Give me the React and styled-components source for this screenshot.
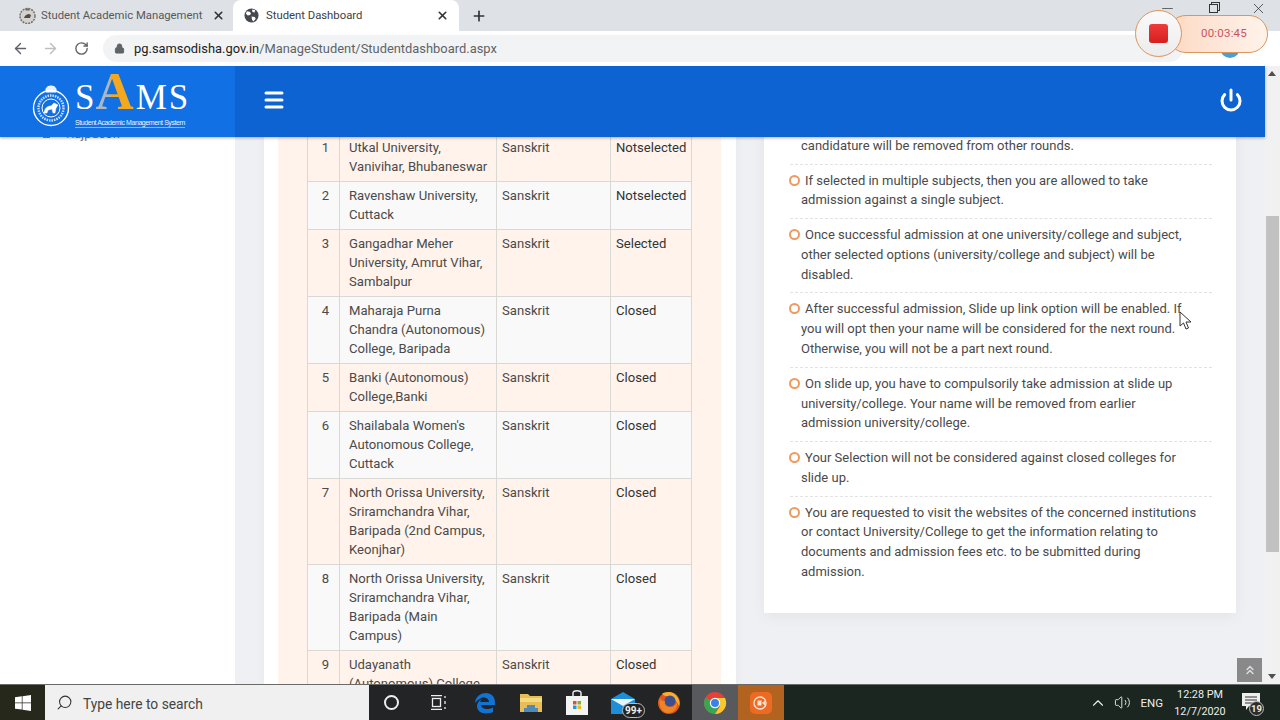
import React from 'react';
import styled, { createGlobalStyle } from 'styled-components';
import { ArrowLeft, ArrowRight, RotateCw, Lock, Plus, X, Minus, Menu, Power, Search, ChevronUp, ChevronsUp, Volume2 } from 'lucide-react';

const Global = createGlobalStyle`
  html, body { margin: 0; padding: 0; width: 1280px; height: 720px; overflow: hidden; }
  body { font-family: Roboto, "Liberation Sans", sans-serif; color: #444; }
  * { box-sizing: border-box; }
`;

const rows = [
  [1, ['Utkal University,', 'Vanivihar, Bhubaneswar'], 'Notselected'],
  [2, ['Ravenshaw University,', 'Cuttack'], 'Notselected'],
  [3, ['Gangadhar Meher', 'University, Amrut Vihar,', 'Sambalpur'], 'Selected'],
  [4, ['Maharaja Purna', 'Chandra (Autonomous)', 'College, Baripada'], 'Closed'],
  [5, ['Banki (Autonomous)', 'College,Banki'], 'Closed'],
  [6, ["Shailabala Women's", 'Autonomous College,', 'Cuttack'], 'Closed'],
  [7, ['North Orissa University,', 'Sriramchandra Vihar,', 'Baripada (2nd Campus,', 'Keonjhar)'], 'Closed'],
  [8, ['North Orissa University,', 'Sriramchandra Vihar,', 'Baripada (Main', 'Campus)'], 'Closed'],
  [9, ['Udayanath', '(Autonomous) College'], 'Closed'],
];

const notes = [
  { lines: ['candidature will be removed from other rounds.'], hidden: true },
  { lines: ['If selected in multiple subjects, then you are allowed to take', 'admission against a single subject.'] },
  { lines: ['Once successful admission at one university/college and subject,', 'other selected options (university/college and subject) will be', 'disabled.'] },
  { lines: ['After successful admission, Slide up link option will be enabled. If', 'you will opt then your name will be considered for the next round.', 'Otherwise, you will not be a part next round.'] },
  { lines: ['On slide up, you have to compulsorily take admission at slide up', 'university/college. Your name will be removed from earlier', 'admission university/college.'] },
  { lines: ['Your Selection will not be considered against closed colleges for', 'slide up.'] },
  { lines: ['You are requested to visit the websites of the concerned institutions', 'or contact University/College to get the information relating to', 'documents and admission fees etc. to be submitted during', 'admission.'] },
];

const Emblem = () => (
  <svg width="38" height="44" viewBox="0 0 38 44" fill="none" stroke="#fff">
    <path d="M14 6c1-4 9-4 10 0v3H14z" fill="#e8f0ff" strokeWidth="1" />
    <circle cx="19" cy="25" r="17.5" strokeWidth="1.4" />
    <circle cx="19" cy="25" r="12.5" strokeWidth="2.4" strokeDasharray="1.5 1" opacity=".8" />
    <circle cx="19" cy="25" r="9" strokeWidth="1" />
    <path d="M12 30c1-5 3-7 7-7l3-3 4 2-2 3-1 5h-2l-1-4-4 1-1 3z" fill="#fff" strokeWidth=".5" />
  </svg>
);

const GlobeIcon = () => (
  <svg width="15" height="15" viewBox="0 0 16 16">
    <circle cx="8" cy="8" r="7.5" fill="#45484d" />
    <path d="M3 3.5l3 .5 1.5 1.5-1 2-2.5.5L2 6zM9 1.5l3 1-1 2.5-2.5-1.5zM8 9l3.5.5 1 2-2.5 3-1.5-2z" fill="#fff" />
  </svg>
);

const TabEmblem = () => (
  <svg width="17" height="17" viewBox="0 0 17 17">
    <circle cx="8.5" cy="9" r="7.5" fill="#d4d2cd" stroke="#77746e" strokeWidth="1.5" strokeDasharray="2 1" />
    <path d="M5 11c1-3 3-4 5-4l2 1-1 3z" fill="#4f4c48" />
    <path d="M6.5 1.5h4v2h-4z" fill="#6f6a60" />
  </svg>
);

const EdgeIcon = () => (
  <svg width="22" height="22" viewBox="0 0 22 22">
    <path d="M1 12C1 5 6 1 12 1c5 0 9 3.5 9 9.5V13H7c.5 4 6 5.5 12 2.5V20c-7 3-16 1.5-16-6 0-3 2-5.5 5-7-1 1-1.800 2-2 3h9c0-4-6-6-9-3-2 1-4 2.500-5 4z" fill="#1173d4" />
  </svg>
);

const FolderIcon = () => (
  <svg width="22" height="19" viewBox="0 0 22 19">
    <path d="M0 1h8l2 2h12v16H0z" fill="#e8bd55" />
    <path d="M0 5h22v4H0z" fill="#f5d97e" />
    <path d="M7 12h8v3h3v4H4v-4h3z" fill="#4f8ab8" />
  </svg>
);

const StoreIcon = () => (
  <svg width="22" height="25" viewBox="0 0 22 25">
    <path d="M7 7V3c0-3 8-3 8 0v4" fill="none" stroke="#e8e8e8" strokeWidth="1.5" />
    <path d="M0 6h22v19H0z" fill="#f3f3f3" />
    <path d="M7 11h3.5v3.5H7z" fill="#e2502c" />
    <path d="M11.5 11H15v3.5h-3.5z" fill="#7eb52c" />
    <path d="M7 15.5h3.5V19H7z" fill="#1b9ce2" />
    <path d="M11.5 15.5H15V19h-3.5z" fill="#f3b71a" />
  </svg>
);

const MailIcon = () => (
  <svg width="24" height="22" viewBox="0 0 24 22">
    <path d="M0 7l12-7 12 7v15H0z" fill="#1d8fd8" />
    <path d="M0 7h24L12 14z" fill="#e8f4fc" />
  </svg>
);

const FirefoxIcon = () => (
  <svg width="24" height="24" viewBox="0 0 24 24">
    <circle cx="12" cy="12" r="11" fill="#e0561f" />
    <path d="M5 3c4-3 12-3 16 4 1 2 2 5 1 8-2-5-5-8-9-9-3-1-6-1-8-3z" fill="#f6b02c" />
    <circle cx="13" cy="10" r="5.5" fill="#3c4f91" />
    <path d="M3 7c1 3 3 3 5 3-1 3 1 6 5 6 3 0 6-2 7-5 1 6-3 11-9 11C5 22 1 15 3 7z" fill="#ee8524" />
  </svg>
);

const ChromeIcon = () => (
  <svg width="24" height="24" viewBox="0 0 24 24">
    <circle cx="12" cy="12" r="11" fill="#e5413a" />
    <path d="M12 12L2.5 6.5A11 11 0 0 0 12 23l5-11z" fill="#36a854" />
    <path d="M12 7h10a11 11 0 0 1-10 16l5-8z" fill="#f8c82f" />
    <circle cx="12" cy="12" r="5.2" fill="#fff" />
    <circle cx="12" cy="12" r="4" fill="#3e80ea" />
  </svg>
);

const RecorderIcon = () => (
  <svg width="22" height="22" viewBox="0 0 22 22">
    <rect width="22" height="22" rx="5" fill="#ee6a23" />
    <circle cx="10" cy="11" r="6" fill="none" stroke="#fde3d2" strokeWidth="1.4" />
    <path d="M7.5 8.5h4v5h-4zM12 11l3-2.5v5z" fill="#fde3d2" />
  </svg>
);

const TaskViewIcon = () => (
  <svg width="16" height="15" viewBox="0 0 16 15" fill="none" stroke="#eee" strokeWidth="1.3">
    <path d="M0 .7h11M0 14.3h11" />
    <rect x="1.5" y="3.5" width="8" height="8" />
    <path d="M14 1v2M14 6v3M14 12v2" />
  </svg>
);

const Cursor = () => (
  <svg width="14" height="20" viewBox="0 0 14 20">
    <path d="M1 1v14l3.5-3 2.5 6 2.5-1-2.5-6H12z" fill="#fff" stroke="#333" strokeWidth="1" />
  </svg>
);

const App = () => (
  <Screen>
    <Global />
    <TabStrip>
      <Tab>
        <TabEmblem />
        <TabTitle>Student Academic Management</TabTitle>
        <X size={13} strokeWidth={3} color="#333" />
      </Tab>
      <Tab $active>
        <GlobeIcon />
        <TabTitle $active>Student Dashboard</TabTitle>
        <X size={13} strokeWidth={3} color="#333" />
      </Tab>
      <NewTab><Plus size={16} strokeWidth={2.5} color="#333" /></NewTab>
      <WindowControls>
        <Minus size={17} strokeWidth={1} color="#333" />
        <RestoreBox />
        <X size={17} strokeWidth={1} color="#222" />
      </WindowControls>
    </TabStrip>

    <Toolbar>
      <ArrowLeft size={17} strokeWidth={2} color="#5f6368" />
      <ArrowRight size={17} strokeWidth={2} color="#bcbec2" />
      <ReloadIcon><RotateCw size={15} strokeWidth={2.2} color="#5f6368" /></ReloadIcon>
      <Omnibox>
        <Lock size={11} fill="#5f6368" color="#5f6368" />
        <Url><b>pg.samsodisha.gov.in</b>/ManageStudent/Studentdashboard.aspx</Url>
      </Omnibox>
      <Avatar />
    </Toolbar>

    <Page>
      <Header>
        <Brand>
          <EmblemSlot><Emblem /></EmblemSlot>
          <BrandText>
            <Wordmark>S<BigA>A</BigA>MS</Wordmark>
            <Tagline>Student Academic Management System</Tagline>
          </BrandText>
        </Brand>
        <HeaderBar>
          <Menu size={24} strokeWidth={3} color="#fff" />
          <Power size={24} strokeWidth={3} color="#fff" />
        </HeaderBar>
      </Header>

      <Sidebar>
        <SideItem>Rajpusoh</SideItem>
      </Sidebar>

      <Content>
        <TableCard>
          <TablePanel>
            <Table>
              <colgroup>
                <col width="32" />
                <col width="157" />
                <col width="114" />
                <col width="81" />
              </colgroup>
              <tbody>
                {rows.map(([no, college, status]) => (
                  <tr key={no}>
                    <NoCell>{no}</NoCell>
                    <CollegeCell>{college.map((l) => <Line key={l}>{l}</Line>)}</CollegeCell>
                    <Cell>Sanskrit</Cell>
                    <StatusCell>{status}</StatusCell>
                  </tr>
                ))}
              </tbody>
            </Table>
          </TablePanel>
        </TableCard>

        <NotesCard>
          <Notes>
            {notes.map((n) => (
              <Note key={n.lines[0]}>
                {n.lines.map((l, i) => (
                  <Line key={l}>
                    {i === 0 && !n.hidden && <Bullet />}
                    {l}
                  </Line>
                ))}
              </Note>
            ))}
          </Notes>
        </NotesCard>
      </Content>

      <Scrollbar>
        <ScrollUp />
        <Thumb />
        <ScrollDown />
      </Scrollbar>
      <TopButton><ChevronsUp size={14} strokeWidth={2.5} color="#ddd" /></TopButton>
      <CursorSpot><Cursor /></CursorSpot>
    </Page>

    <Taskbar>
      <StartButton>
        <svg width="16" height="16" viewBox="0 0 16 16" fill="#fff">
          <path d="M0 2.3l6.8-1v6.200H0zM7.500 1.200L16 0v7.500H7.500zM0 8.300h6.800v6.300L0 13.700zM7.500 8.300H16V16l-8.500-1.200z" />
        </svg>
      </StartButton>
      <SearchBox>
        <Search size={17} strokeWidth={1.5} color="#333" style={{ transform: 'scaleX(-1)' }} />
        <SearchText>Type here to search</SearchText>
      </SearchBox>
      <Tray>
        <TrayIcon><Cortana /></TrayIcon>
        <TrayIcon><TaskViewIcon /></TrayIcon>
        <TrayIcon><EdgeIcon /></TrayIcon>
        <TrayIcon><FolderIcon /></TrayIcon>
        <TrayIcon><StoreIcon /></TrayIcon>
        <TrayIcon>
          <MailIcon />
          <MailBadge>99+</MailBadge>
        </TrayIcon>
        <TrayIcon><FirefoxIcon /></TrayIcon>
        <TrayIcon $bg="#58595c"><ChromeIcon /></TrayIcon>
        <TrayIcon $bg="#b1631f"><RecorderIcon /></TrayIcon>
      </Tray>
      <SystemTray>
        <ChevronUp size={18} strokeWidth={1.5} color="#eee" />
        <Volume2 size={17} strokeWidth={1.3} color="#eee" />
        <Lang>ENG</Lang>
        <Clock><span>12:28 PM</span><span>12/7/2020</span></Clock>
        <Notify>
          <svg width="18" height="17" viewBox="0 0 18 17">
            <path d="M0 0h18v13H7l-3 4v-4H0z" fill="#eee" />
            <path d="M3 4h12M3 7h12M3 10h8" stroke="#333" strokeWidth="1" />
          </svg>
          <NotifyCount>19</NotifyCount>
        </Notify>
      </SystemTray>
    </Taskbar>

    <Recorder>
      <RecorderPill>00:03:45</RecorderPill>
      <RecorderButton><StopSquare /></RecorderButton>
    </Recorder>
  </Screen>
);

const Screen = styled.div`
  position: relative;
  width: 1280px;
  height: 720px;
  display: flex;
  flex-direction: column;
  overflow: hidden;
  background: #fff;
`;

const TabStrip = styled.div`
  height: 31px;
  flex: none;
  display: flex;
  align-items: center;
  background: #dee1e6;
`;

const Tab = styled.div`
  width: ${(p) => (p.$active ? '226px' : '233px')};
  height: 31px;
  display: flex;
  align-items: center;
  padding: ${(p) => (p.$active ? '0 10px 0 11px' : '0 8px 0 19px')};
  background: ${(p) => (p.$active ? '#fff' : 'transparent')};
  border-radius: 8px 8px 0 0;
`;

const TabTitle = styled.span`
  flex: 1;
  margin-left: ${(p) => (p.$active ? '7px' : '5px')};
  font-size: 11.3px;
  color: ${(p) => (p.$active ? '#3c4043' : '#55585c')};
  white-space: nowrap;
  overflow: hidden;
`;

const NewTab = styled.div`
  width: 40px;
  display: flex;
  justify-content: center;
`;

const WindowControls = styled.div`
  margin-left: auto;
  width: 108px;
  margin-right: 13px;
  display: flex;
  align-items: center;
  justify-content: space-between;
  padding-bottom: 14px;
`;

const RestoreBox = styled.div`
  width: 9px;
  height: 9px;
  border: 1px solid #333;
  box-shadow: 2px -2px 0 -1px #dee1e6, 2px -2px 0 0 #333;
`;

const Toolbar = styled.div`
  height: 35px;
  flex: none;
  display: flex;
  align-items: center;
  gap: 13px;
  padding: 0 12px;
  background: #fff;
`;

const ReloadIcon = styled.span`
  display: flex;
  margin-left: 2px;
`;

const Omnibox = styled.div`
  width: 1080px;
  height: 27px;
  margin-left: 1px;
  padding-left: 11px;
  display: flex;
  align-items: center;
  gap: 9px;
  border-radius: 14px;
  background: #f1f3f4;
`;

const Url = styled.span`
  font-size: 12.9px;
  color: #5f6368;
  b { font-weight: 400; color: #202124; }
`;

const Avatar = styled.div`
  position: absolute;
  left: 1220px;
  top: 42px;
  width: 20px;
  height: 16px;
  border-radius: 0 0 10px 10px;
  background: #45a0d8;
`;

const Page = styled.div`
  position: relative;
  flex: 1;
  min-height: 0;
  display: flex;
  background: #eff0f4;
  overflow: hidden;
`;

const Header = styled.header`
  position: absolute;
  left: 0;
  top: 0;
  z-index: 2;
  width: 1265px;
  height: 71px;
  display: flex;
  box-shadow: 0 1px 3px rgba(0, 0, 0, .3);
`;

const Brand = styled.div`
  width: 235px;
  display: flex;
  align-items: flex-start;
  padding-left: 32px;
  gap: 5px;
  background: #1170e4;
`;

const EmblemSlot = styled.div`
  margin-top: 17px;
  line-height: 0;
`;

const BrandText = styled.div`
  margin-top: 12px;
`;

const Wordmark = styled.div`
  height: 40px;
  font-family: "Liberation Serif", serif;
  font-size: 35px;
  line-height: 40px;
  letter-spacing: 2px;
  white-space: nowrap;
  color: #fff;
`;

const BigA = styled.span`
  margin: 0 2px 0 -1px;
  font-size: 53px;
  font-weight: 700;
  line-height: 0;
  letter-spacing: 0;
  color: transparent;
  background: linear-gradient(90deg, #a9b8c6 36%, #f4a81d 42%);
  -webkit-background-clip: text;
  background-clip: text;
`;

const Tagline = styled.div`
  width: 110px;
  margin-top: 1px;
  padding-bottom: 1px;
  border-bottom: 1px solid rgba(255, 255, 255, .5);
  font-size: 7px;
  font-family: "Liberation Sans", sans-serif;
  letter-spacing: -.43px;
  white-space: nowrap;
  color: #e8f2ff;
`;

const HeaderBar = styled.div`
  flex: 1;
  display: flex;
  align-items: center;
  justify-content: space-between;
  padding: 0 22px 3px 27px;
  background: #0e63d3;
`;

const Sidebar = styled.aside`
  width: 235px;
  flex: none;
  padding: 60px 0 0 43px;
  background: #fff;
`;

const SideItem = styled.div`
  display: flex;
  align-items: center;
  gap: 16px;
  font-size: 13px;
  color: #777;
  &::before {
    content: '';
    width: 7px;
    height: 7px;
    margin-top: 2px;
    background: #888;
  }
`;

const Content = styled.main`
  width: 1030px;
  flex: none;
  display: flex;
  align-items: flex-start;
  padding-left: 29px;
  gap: 28px;
`;

const TableCard = styled.section`
  width: 472px;
  height: 618px;
  padding: 0 15px 0 14px;
  background: #fff;
  box-shadow: 0 0 10px rgba(0, 0, 0, .04);
`;

const TablePanel = styled.div`
  height: 100%;
  padding: 67px 30px 0 29px;
  overflow: hidden;
  background: #fff3ec;
`;

const Table = styled.table`
  width: 384px;
  table-layout: fixed;
  border-collapse: collapse;
  font-size: 13.1px;
  line-height: 19px;
  tr:nth-child(odd) { background: #fff3ec; }
  tr:nth-child(even) { background: #f9f9f9; }
`;

const Cell = styled.td`
  padding: 4px 0 5px 5px;
  vertical-align: top;
  border: 1px solid #d8d8d4;
  color: #4a4a4a;
`;

const NoCell = styled(Cell)`
  padding-left: 4px;
  text-align: center;
`;

const CollegeCell = styled(Cell)`
  padding-left: 9px;
`;

const StatusCell = styled(Cell)`
  color: #333;
`;

const Line = styled.div`
  white-space: nowrap;
`;

const NotesCard = styled.section`
  width: 472px;
  height: 547px;
  padding: 64px 24px 0 26px;
  background: #fff;
  box-shadow: 0 4px 14px rgba(0, 0, 0, .05);
`;

const Notes = styled.ul`
  list-style: none;
  margin: 0;
  padding: 0;
`;

const Note = styled.li`
  padding: 6px 0 7.9px 11px;
  font-size: 13px;
  line-height: 19.8px;
  color: #4a4a4a;
  border-bottom: 1px dashed #e2e2e2;
  &:last-child { border-bottom: 0; }
`;

const Bullet = styled.span`
  display: inline-block;
  width: 11px;
  height: 11px;
  margin: 0 5px 0 -12px;
  vertical-align: -1px;
  border: 2px solid #ef9a5f;
  border-radius: 50%;
`;

const Scrollbar = styled.div`
  width: 15px;
  flex: none;
  position: relative;
  background: #f1f1f1;
`;

const Thumb = styled.div`
  position: absolute;
  left: 1px;
  top: 150px;
  width: 13px;
  height: 336px;
  background: #c1c1c1;
`;

const ScrollUp = styled.div`
  position: absolute;
  left: 3px;
  top: 5px;
  border: 4px solid transparent;
  border-top: 0;
  border-bottom: 5px solid #505050;
`;

const ScrollDown = styled(ScrollUp)`
  top: auto;
  bottom: 5px;
  border-top: 5px solid #505050;
  border-bottom: 0;
`;

const TopButton = styled.div`
  position: absolute;
  left: 1237px;
  top: 592px;
  width: 25px;
  height: 24px;
  display: flex;
  align-items: center;
  justify-content: center;
  background: #898989;
`;

const CursorSpot = styled.div`
  position: absolute;
  left: 1179px;
  top: 245px;
  line-height: 0;
`;

const Taskbar = styled.footer`
  height: 36px;
  flex: none;
  display: flex;
  background: #1b1f1e;
  border-top: 1px solid #6a6a6a;
`;

const StartButton = styled.div`
  width: 45px;
  display: flex;
  align-items: center;
  justify-content: center;
  background: #25281a;
`;

const SearchBox = styled.div`
  width: 324px;
  display: flex;
  align-items: center;
  gap: 10px;
  padding-left: 11px;
  background: #f0f0f0;
`;

const SearchText = styled.span`
  padding-top: 3px;
  font-size: 13.8px;
  color: #444;
`;

const Tray = styled.div`
  display: flex;
  padding-left: 1px;
  background: #232426;
`;

const TrayIcon = styled.div`
  position: relative;
  width: 46px;
  display: flex;
  align-items: center;
  justify-content: center;
  background: ${(p) => p.$bg || 'transparent'};
`;

const Cortana = styled.div`
  width: 15px;
  height: 15px;
  margin-right: 3px;
  border: 2.5px solid #eee;
  border-radius: 50%;
`;

const MailBadge = styled.span`
  position: absolute;
  right: 1px;
  bottom: 2px;
  padding: 0 2px;
  border: 1px solid #bbb;
  border-radius: 8px;
  font-size: 10px;
  font-weight: 700;
  line-height: 13px;
  color: #eee;
  background: #222;
`;

const SystemTray = styled.div`
  flex: 1;
  display: flex;
  align-items: center;
  justify-content: flex-end;
  gap: 7px;
  padding-right: 11px;
  color: #eee;
  background: #1a261f;
`;

const Lang = styled.span`
  margin-left: 2px;
  font-size: 11.5px;
`;

const Clock = styled.div`
  width: 60px;
  display: flex;
  flex-direction: column;
  align-items: center;
  font-size: 10.8px;
  line-height: 17px;
`;

const Notify = styled.div`
  position: relative;
  width: 37px;
  height: 24px;
  margin-left: -5px;
  padding: 2px 0 0 10px;
`;

const NotifyCount = styled.span`
  position: absolute;
  left: 17px;
  bottom: -1px;
  width: 15px;
  height: 15px;
  border: 1px solid #bbb;
  border-radius: 50%;
  font-size: 9.5px;
  font-weight: 700;
  line-height: 13px;
  text-align: center;
  background: #2a2d2c;
`;

const Recorder = styled.div`
  position: absolute;
  left: 1135px;
  top: 10px;
  width: 134px;
  height: 47px;
  z-index: 3;
`;

const RecorderPill = styled.div`
  position: absolute;
  left: 32px;
  top: 5px;
  width: 101px;
  height: 38px;
  padding-left: 33px;
  border: 1.5px solid #e09455;
  border-radius: 19px;
  font-size: 11.5px;
  line-height: 35px;
  letter-spacing: .2px;
  color: #c9545e;
  background: linear-gradient(90deg, #fcd9c4, #fff3ea);
`;

const RecorderButton = styled.div`
  position: absolute;
  left: 0;
  top: 0;
  width: 47px;
  height: 47px;
  display: flex;
  align-items: center;
  justify-content: center;
  border: 1.5px solid #e09455;
  border-radius: 50%;
  background: linear-gradient(#fafafa, #ececec);
`;

const StopSquare = styled.div`
  width: 19px;
  height: 19px;
  border-radius: 3px;
  background: linear-gradient(#ee3b3b, #d81e1e);
`;

export default App;
